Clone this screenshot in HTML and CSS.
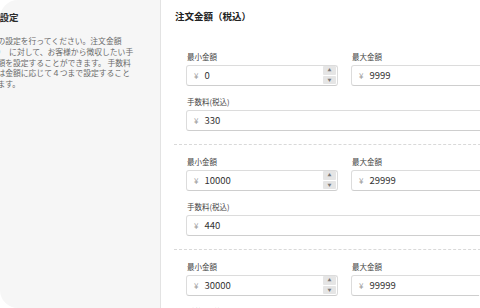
FILE: index.html
```html
<!DOCTYPE html>
<html lang="ja">
<head>
<meta charset="utf-8">
<title>手数料設定</title>
<link rel="stylesheet" href="styles.css">
</head>
<body>
<div class="card">
  <aside class="side">
    <div class="side-inner">
      <h2 class="side-title">手数料設定</h2>
      <p class="side-text">手数料の設定を行ってください。注文金額<br>（税込）　に対して、お客様から徴収したい手<br>数料金額を設定することができます。 手数料<br>の上限は金額に応じて４つまで設定すること<br>ができます。</p>
    </div>
  </aside>
  <main class="main">
    <h2 class="main-title">注文金額（税込）</h2>

    <section class="tier">
      <div class="pair">
        <div class="field">
          <span class="label">最小金額</span>
          <div class="input"><span class="yen">¥</span><span class="val">0</span><span class="stepper"><span class="step">▲</span><span class="step">▼</span></span></div>
        </div>
        <div class="field">
          <span class="label">最大金額</span>
          <div class="input"><span class="yen">¥</span><span class="val">9999</span></div>
        </div>
      </div>
      <div class="field fee">
        <span class="label">手数料(税込)</span>
        <div class="input"><span class="yen">¥</span><span class="val">330</span></div>
      </div>
    </section>

    <section class="tier">
      <div class="pair">
        <div class="field">
          <span class="label">最小金額</span>
          <div class="input"><span class="yen">¥</span><span class="val">10000</span><span class="stepper"><span class="step">▲</span><span class="step">▼</span></span></div>
        </div>
        <div class="field">
          <span class="label">最大金額</span>
          <div class="input"><span class="yen">¥</span><span class="val">29999</span></div>
        </div>
      </div>
      <div class="field fee">
        <span class="label">手数料(税込)</span>
        <div class="input"><span class="yen">¥</span><span class="val">440</span></div>
      </div>
    </section>

    <section class="tier">
      <div class="pair">
        <div class="field">
          <span class="label">最小金額</span>
          <div class="input"><span class="yen">¥</span><span class="val">30000</span><span class="stepper"><span class="step">▲</span><span class="step">▼</span></span></div>
        </div>
        <div class="field">
          <span class="label">最大金額</span>
          <div class="input"><span class="yen">¥</span><span class="val">99999</span></div>
        </div>
      </div>
      <div class="field fee">
        <span class="label">手数料(税込)</span>
        <div class="input"><span class="yen">¥</span><span class="val">550</span></div>
      </div>
    </section>
  </main>
</div>
</body>
</html>
```

FILE: styles.css
```css
html, body {
  margin: 0;
  padding: 0;
  background: #ffffff;
}

.card {
  width: 480px;
  height: 308px;
  display: flex;
  overflow: hidden;
  border-radius: 18px;
  background: #ffffff;
  font-family: "Noto Sans CJK JP", "Noto Sans", sans-serif;
}

.side {
  flex: 0 0 161px;
  box-sizing: border-box;
  background: #f6f6f6;
  border-right: 1px solid #e3e3e3;
  padding-top: 11px;
  overflow: hidden;
}

.side-inner {
  margin-left: -26px;
  white-space: nowrap;
}

.side-title {
  margin: 0 0 12px -3px;
  font-size: 9.5px;
  line-height: 13px;
  font-weight: 700;
  color: #2b2b2b;
}

.side-text {
  margin: 0;
  font-size: 7.8px;
  line-height: 10.8px;
  color: #6a6a6a;
}

.main {
  flex: 0 0 auto;
  width: 345px;
  box-sizing: border-box;
  padding: 10px 0 0 13px;
}

.main-title {
  margin: 0 0 16.5px 1px;
  font-size: 9.5px;
  line-height: 13px;
  font-weight: 700;
  color: #222222;
}

.tier {
  padding: 12px 0 13px 12px;
  border-bottom: 1px dashed #d9d9d9;
}

.pair {
  display: grid;
  grid-template-columns: 152px 152px;
  column-gap: 13px;
  margin-bottom: 11px;
}

.fee {
  width: 317px;
}

.label {
  display: block;
  margin: 0 0 3px 1px;
  font-size: 7.5px;
  line-height: 10px;
  color: #444444;
}

.input {
  display: flex;
  align-items: center;
  height: 21px;
  box-sizing: border-box;
  padding: 0 1px 0 7px;
  background: #ffffff;
  border: 1px solid #dcdcdc;
  border-bottom-color: #cecece;
  border-radius: 3px;
}

.yen {
  margin-right: 6px;
  font-size: 8px;
  color: #9a9a9a;
}

.val {
  font-size: 9.5px;
  color: #333333;
}

.stepper {
  margin-left: auto;
  display: flex;
  flex-direction: column;
  gap: 1px;
}

.step {
  width: 13px;
  height: 8.5px;
  display: flex;
  align-items: center;
  justify-content: center;
  background: #e5e5e5;
  border-radius: 1px;
  font-size: 4px;
  line-height: 1;
  color: #7a7a7a;
}
```
